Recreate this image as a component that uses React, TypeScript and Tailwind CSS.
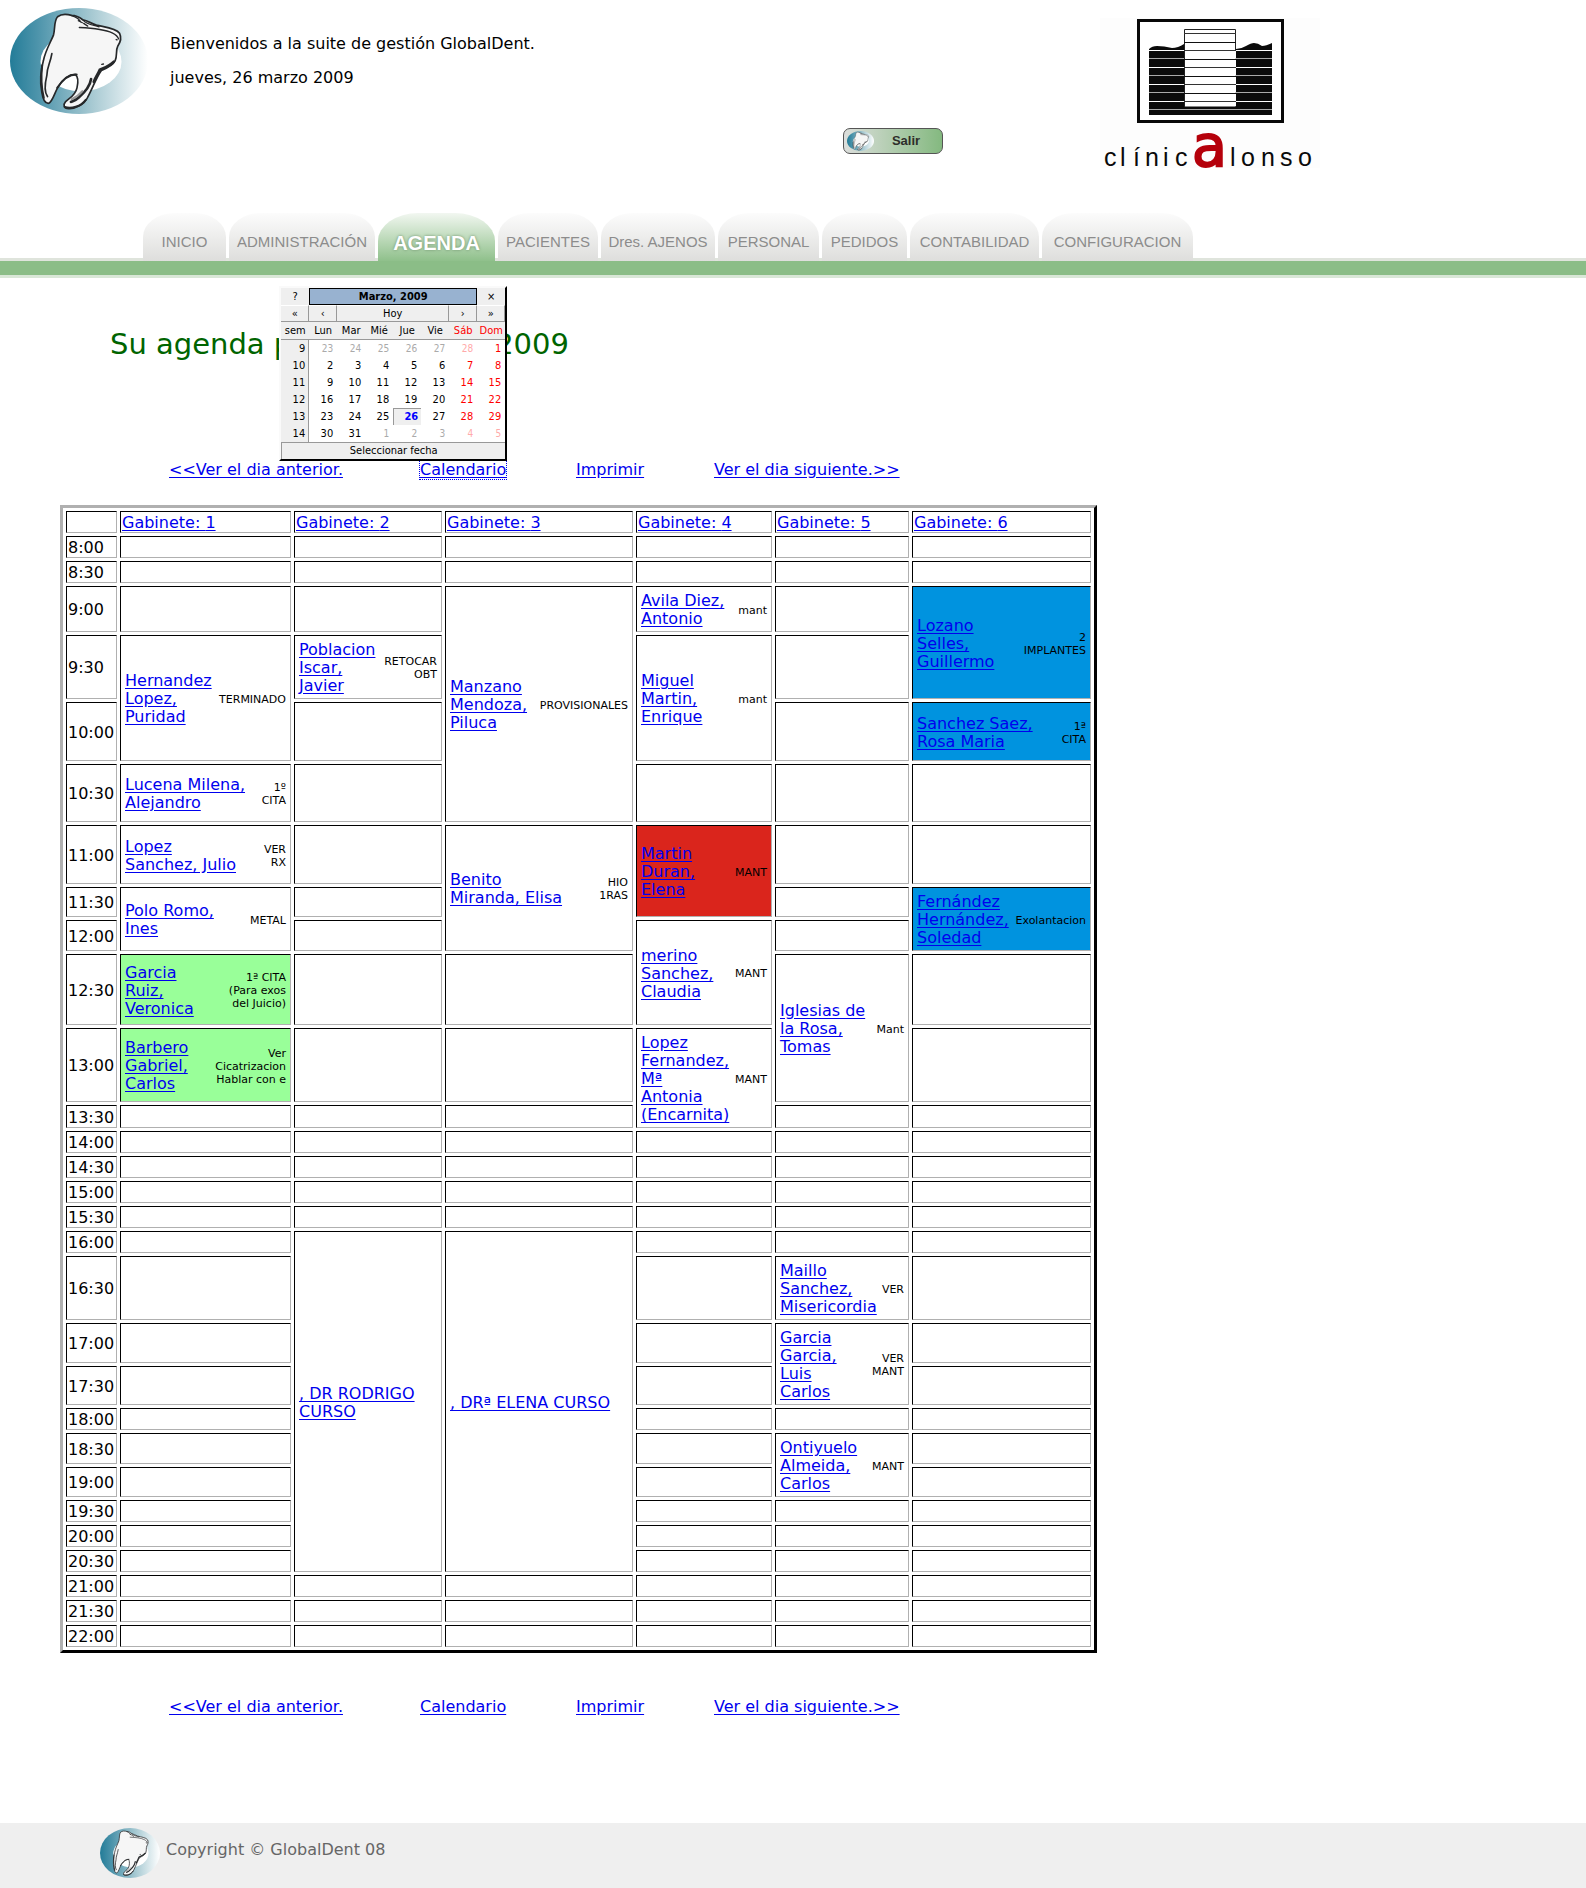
import { useId } from "react";

type Appointment = {
  col: number;
  span: number;
  name: string;
  note?: string;
  tone?: "blue" | "red" | "green";
};

type Slot = { time: string; height: string; items?: Appointment[] };

const H22 = "h-[22px]";

const slots: Slot[] = [
  { time: "8:00", height: H22 },
  { time: "8:30", height: H22 },
  {
    time: "9:00",
    height: "h-[46px]",
    items: [
      { col: 3, span: 4, name: "Manzano\nMendoza,\nPiluca", note: "PROVISIONALES" },
      { col: 4, span: 1, name: "Avila Diez,\nAntonio", note: "mant" },
      { col: 6, span: 2, name: "Lozano\nSelles,\nGuillermo", note: "2\nIMPLANTES", tone: "blue" },
    ],
  },
  {
    time: "9:30",
    height: "h-[64px]",
    items: [
      { col: 1, span: 2, name: "Hernandez\nLopez,\nPuridad", note: "TERMINADO" },
      { col: 2, span: 1, name: "Poblacion\nIscar,\nJavier", note: "RETOCAR\nOBT" },
      { col: 4, span: 2, name: "Miguel\nMartin,\nEnrique", note: "mant" },
    ],
  },
  {
    time: "10:00",
    height: "h-[59px]",
    items: [{ col: 6, span: 1, name: "Sanchez Saez,\nRosa Maria", note: "1ª\nCITA", tone: "blue" }],
  },
  {
    time: "10:30",
    height: "h-[58px]",
    items: [{ col: 1, span: 1, name: "Lucena Milena,\nAlejandro", note: "1º\nCITA" }],
  },
  {
    time: "11:00",
    height: "h-[59px]",
    items: [
      { col: 1, span: 1, name: "Lopez\nSanchez, Julio", note: "VER\nRX" },
      { col: 3, span: 3, name: "Benito\nMiranda, Elisa", note: "HIO\n1RAS" },
      { col: 4, span: 2, name: "Martin\nDuran,\nElena", note: "MANT", tone: "red" },
    ],
  },
  {
    time: "11:30",
    height: "h-[30px]",
    items: [
      { col: 1, span: 2, name: "Polo Romo,\nInes", note: "METAL" },
      { col: 6, span: 2, name: "Fernández\nHernández,\nSoledad", note: "Exolantacion", tone: "blue" },
    ],
  },
  {
    time: "12:00",
    height: "h-[31px]",
    items: [{ col: 4, span: 2, name: "merino\nSanchez,\nClaudia", note: "MANT" }],
  },
  {
    time: "12:30",
    height: "h-[71px]",
    items: [
      { col: 1, span: 1, name: "Garcia\nRuiz,\nVeronica", note: "1ª CITA\n(Para exos\ndel Juicio)", tone: "green" },
      { col: 5, span: 2, name: "Iglesias de\nla Rosa,\nTomas", note: "Mant" },
    ],
  },
  {
    time: "13:00",
    height: "h-[74px]",
    items: [
      { col: 1, span: 1, name: "Barbero\nGabriel,\nCarlos", note: "Ver\nCicatrizacion\nHablar con e", tone: "green" },
      { col: 4, span: 2, name: "Lopez\nFernandez,\nMª\nAntonia\n(Encarnita)", note: "MANT" },
    ],
  },
  { time: "13:30", height: "h-[23px]" },
  { time: "14:00", height: H22 },
  { time: "14:30", height: H22 },
  { time: "15:00", height: H22 },
  { time: "15:30", height: H22 },
  {
    time: "16:00",
    height: H22,
    items: [
      { col: 2, span: 10, name: ", DR RODRIGO\nCURSO" },
      { col: 3, span: 10, name: ", DRª ELENA CURSO" },
    ],
  },
  {
    time: "16:30",
    height: "h-[64px]",
    items: [{ col: 5, span: 1, name: "Maillo\nSanchez,\nMisericordia", note: "VER" }],
  },
  {
    time: "17:00",
    height: "h-[40px]",
    items: [{ col: 5, span: 2, name: "Garcia\nGarcia,\nLuis\nCarlos", note: "VER\nMANT" }],
  },
  { time: "17:30", height: "h-[39px]" },
  { time: "18:00", height: H22 },
  {
    time: "18:30",
    height: "h-[31px]",
    items: [{ col: 5, span: 2, name: "Ontiyuelo\nAlmeida,\nCarlos", note: "MANT" }],
  },
  { time: "19:00", height: "h-[30px]" },
  { time: "19:30", height: H22 },
  { time: "20:00", height: H22 },
  { time: "20:30", height: H22 },
  { time: "21:00", height: H22 },
  { time: "21:30", height: H22 },
  { time: "22:00", height: H22 },
];

const tones = { blue: "bg-[#0093df]", red: "bg-[#da251c]", green: "bg-[#99ff99]" };
const cellBorder = "border border-t-black border-l-black border-r-[#b0b0b0] border-b-[#b0b0b0]";
const cellPad = "px-px pt-0.5 pb-0";
const link = "text-[#0000ee] underline underline-offset-2";

function isCovered(row: number, col: number) {
  return slots.some((s, r) => r < row && s.items?.some((a) => a.col === col && r + a.span > row));
}

function ToothLogo({ className }: { className: string }) {
  const id = useId();
  return (
    <svg viewBox="30 24 412 316" preserveAspectRatio="none" className={className} role="img" aria-label="GlobalDent">
      <defs>
        <linearGradient id={id} x1="0" x2="1">
          <stop offset="0" stopColor="#237c98" />
          <stop offset="0.2" stopColor="#4d94ab" />
          <stop offset="0.6" stopColor="#a8cad3" />
          <stop offset="1" stopColor="#ffffff" />
        </linearGradient>
      </defs>
      <ellipse cx="236" cy="182" rx="206" ry="158" fill={`url(#${id})`} />
      <ellipse cx="242" cy="184" rx="121" ry="88" fill="#fff" />
      <path
        d="M172 50C182 42 200 42 214 46C227 46 238 52 247 59C264 63 272 70 288 75C312 81 346 84 357 99C363 112 360 126 352 137C345 150 351 165 344 181C337 196 318 204 303 210C290 226 278 260 262 290C252 312 225 325 205 324C190 324 188 312 196 303C210 290 225 285 230 262C234 245 232 228 225 222C205 222 185 240 172 262C162 280 158 300 146 308C134 310 128 295 125 275C120 250 120 215 130 180C136 150 152 125 160 104C165 85 161 62 172 50Z"
        fill="#f6f6f6"
        stroke="#26282a"
        strokeWidth="5"
        strokeLinejoin="round"
      />
      <g fill="none" stroke="#26282a" strokeLinecap="round">
        <path d="M237 82C275 84 310 86 335 98C345 103 352 108 354 116" strokeWidth="4" />
        <path d="M214 47C228 52 238 58 241 66M234 62L246 68M250 70L262 78M248 60C262 76 280 74 296 80" strokeWidth="4" />
        <path d="M347 118L350 119M304 192L309 191" strokeWidth="4" />
        <path d="M155 160C150 190 140 200 140 225C134 250 132 275 142 288" strokeWidth="5" />
        <path d="M126 195C122 230 124 265 131 292" strokeWidth="6" />
        <path d="M171 262C186 238 205 222 229 222" strokeWidth="6" />
        <path d="M272 236C268 262 250 278 236 290C226 300 216 302 212 304" strokeWidth="8" />
        <path d="M340 184C326 198 312 202 298 208C292 222 286 230 280 244" strokeWidth="8" />
        <path d="M193 319C212 326 242 318 256 298" strokeWidth="6" />
        <path d="M246 272C236 284 224 292 214 296" stroke="#999" strokeWidth="6" />
      </g>
    </svg>
  );
}

function ClinicLogo() {
  const gaps = [32, 40, 49, 57, 66, 74, 83, 91];
  const floors = [15, 24, 32, 41, 49, 58, 66, 75, 83];
  return (
    <svg viewBox="0 0 220 170" className="h-[170px] w-[220px]" role="img" aria-label="clínica Alonso">
      <rect width="220" height="150" fill="#fdfdfd" />
      <rect x="38.5" y="2.5" width="144" height="101" fill="#fff" stroke="#080808" strokeWidth="3" />
      <path d="M49 97V31Q52 28 57 28Q64 28 72 30Q78 30 84 26V97ZM136 97V31Q141 31 146 28Q151 25 154 25Q158 25 162 28Q166 28 172 25V97Z" fill="#0b0b0b" />
      <rect x="49" y="88" width="123" height="9" fill="#0b0b0b" />
      {gaps.map((y, i) => (
        <rect key={y} x="49" y={y} width="123" height="1" fill={i % 2 ? "#aaa" : "#fff"} />
      ))}
      <rect x="84.500" y="11.500" width="51" height="77" fill="#fff" />
      <path d="M84.500 89V11.500H135.500V32" fill="none" stroke="#222" />
      {floors.map((y, i) => (
        <rect key={y} x="84" y={y} width="52" height="1" fill={i % 2 ? "#111" : "#333"} />
      ))}
      <g fontFamily="Liberation Sans, Arial, sans-serif" fontSize="25" fill="#0a0a0a">
        <text y="148" x="4 20 33 45 63 75">clínic</text>
        <text y="148" x="130 141 161 180 198">lonso</text>
      </g>
      <text x="92" y="148" fontFamily="DejaVu Sans, Verdana, sans-serif" fontSize="57" fill="#b5000b" stroke="#b5000b" strokeWidth="2">
        a
      </text>
    </svg>
  );
}

const tabs = [
  { label: "INICIO", width: "w-[83px]" },
  { label: "ADMINISTRACIÓN", width: "w-[146px]" },
  { label: "AGENDA", width: "w-[117px]", active: true },
  { label: "PACIENTES", width: "w-[100px]" },
  { label: "Dres. AJENOS", width: "w-[114px]" },
  { label: "PERSONAL", width: "w-[101px]" },
  { label: "PEDIDOS", width: "w-[85px]" },
  { label: "CONTABILIDAD", width: "w-[129px]" },
  { label: "CONFIGURACION", width: "w-[151px]" },
];

function Tabs() {
  return (
    <nav aria-label="Principal" className="bg-[linear-gradient(#dfe4dc,#dfe4dc)] bg-[length:100%_3px] bg-bottom bg-no-repeat">
      <div className="flex gap-[3px] pl-[143px] font-['Liberation_Sans',Arial,sans-serif]">
        {tabs.map((t) =>
          t.active ? (
            <a
              key={t.label}
              href="#agenda"
              aria-current="page"
              className={`${t.width} flex h-12 items-center justify-center rounded-t-[40px_28px] bg-linear-to-b from-[#f2f7f1] to-[#8fc08b] pt-3 text-xl font-bold text-white [text-shadow:0_0_3px_#6b8f69]`}
            >
              {t.label}
            </a>
          ) : (
            <a
              key={t.label}
              href={"#" + t.label.toLowerCase()}
              className={`${t.width} flex h-12 items-center justify-center rounded-t-[32px_24px] bg-linear-to-b from-[#fcfcfc] to-[#dededc] pt-[10px] text-[15px] whitespace-nowrap text-[#8c8c8c]`}
            >
              {t.label}
            </a>
          ),
        )}
      </div>
    </nav>
  );
}

const weeks: [number, number[]][] = [
  [9, [23, 24, 25, 26, 27, 28, 1]],
  [10, [2, 3, 4, 5, 6, 7, 8]],
  [11, [9, 10, 11, 12, 13, 14, 15]],
  [12, [16, 17, 18, 19, 20, 21, 22]],
  [13, [23, 24, 25, 26, 27, 28, 29]],
  [14, [30, 31, 1, 2, 3, 4, 5]],
];

function dayColor(week: number, index: number, day: number) {
  const outside = (week === 9 && day > 7) || (week === 14 && day < 7);
  if (index > 4) return outside ? "text-[#ffaaaa] text-[10px]" : "text-[#ff0000]";
  return outside ? "text-[#aaaaaa] text-[10px]" : "text-black";
}

function CalendarPopup() {
  const key = "bg-[#efefef] p-0 text-center";
  const edge = "border-r border-b border-[#999] border-t border-t-white";
  const btn = "block h-[15px] w-full leading-[15px]";
  return (
    <div className="absolute -right-px bottom-full z-10 w-[228px] border-2 border-t-[#fafafa] border-r-black border-b-black border-l-[#fafafa] bg-white font-['DejaVu_Sans_Condensed','DejaVu_Sans',sans-serif] text-[11px] leading-[16px] text-black">
      <table className="w-full table-fixed border-separate border-spacing-0" aria-label="Marzo, 2009">
        <thead>
          <tr className="h-[17px]">
            <td className={key}><button className={btn}>?</button></td>
            <th colSpan={6} className="border border-black bg-[#98b2d0] p-0 text-center leading-[15px] font-bold">Marzo, 2009</th>
            <td className={key}><button className={btn}>×</button></td>
          </tr>
          <tr className="h-[17px]">
            <td className={`${key} ${edge}`}><button className={btn}>«</button></td>
            <td className={`${key} ${edge}`}><button className={btn}>‹</button></td>
            <td colSpan={4} className={`${key} ${edge}`}><button className={btn}>Hoy</button></td>
            <td className={`${key} ${edge}`}><button className={btn}>›</button></td>
            <td className={`${key} ${edge}`}><button className={btn}>»</button></td>
          </tr>
          <tr className="h-[18px]">
            {["sem", "Lun", "Mar", "Mié", "Jue", "Vie", "Sáb", "Dom"].map((d, i) => (
              <th key={d} className={`border-b border-[#999] bg-[#efefef] p-0 text-center font-normal ${i > 5 ? "text-[#ff0000]" : ""}`}>{d}</th>
            ))}
          </tr>
        </thead>
        <tbody>
          {weeks.map(([week, days]) => (
            <tr key={week} className="h-[17px]">
              <th className="border-r border-[#999] bg-[#efefef] p-0 pr-[3px] text-right font-normal">{week}</th>
              {days.map((d, i) =>
                week === 13 && d === 26 ? (
                  <td key={i} className="border-t border-l border-[#999] bg-[#efefef] p-0 pr-[3px] text-right font-bold text-[#0000ff]">{d}</td>
                ) : (
                  <td key={i} className={`p-0 pr-1 text-right ${dayColor(week, i, d)}`}>{d}</td>
                ),
              )}
            </tr>
          ))}
        </tbody>
        <tfoot>
          <tr className="h-[17px]">
            <td colSpan={8} className="border-t border-l border-[#999] bg-[#efefef] p-0 text-center">Seleccionar fecha</td>
          </tr>
        </tfoot>
      </table>
    </div>
  );
}

function DayLinks({ open }: { open?: boolean }) {
  return (
    <nav aria-label="Día" className="grid grid-cols-[251px_156px_138px_auto] justify-start pl-[169px] leading-[18px] whitespace-nowrap">
      <div><a href="#anterior" className={link}>&lt;&lt;Ver el dia anterior.</a></div>
      <div>
        <div className="relative inline-block">
          {open && <CalendarPopup />}
          <a href="#calendario" className={`${link} ${open ? "outline-1 outline-[#0000ee] outline-dotted" : ""}`}>Calendario</a>
        </div>
      </div>
      <div><a href="#imprimir" className={link}>Imprimir</a></div>
      <div><a href="#siguiente" className={link}>Ver el dia siguiente.&gt;&gt;</a></div>
    </nav>
  );
}

function Schedule() {
  return (
    <table className="w-[1037px] table-fixed border-separate border-spacing-[3px] border-[3px] border-t-[#b0b0b0] border-r-black border-b-black border-l-[#b0b0b0] leading-[18px]">
      <colgroup>
        <col className="w-[51px]" />
        <col className="w-[171px]" />
        <col className="w-[148px]" />
        <col className="w-[188px]" />
        <col className="w-[136px]" />
        <col className="w-[134px]" />
        <col className="w-[179px]" />
      </colgroup>
      <thead>
        <tr className="h-[22px]">
          <td className={`${cellBorder} ${cellPad}`} />
          {[1, 2, 3, 4, 5, 6].map((n) => (
            <th key={n} scope="col" className={`${cellBorder} ${cellPad} text-left font-normal`}>
              <a href={`#gabinete-${n}`} className={link}>Gabinete: {n}</a>
            </th>
          ))}
        </tr>
      </thead>
      <tbody>
        {slots.map((slot, row) => (
          <tr key={slot.time} className={slot.height}>
            <th scope="row" className={`${cellBorder} ${cellPad} text-left font-normal whitespace-nowrap`}>{slot.time}</th>
            {[1, 2, 3, 4, 5, 6].map((col) => {
              if (isCovered(row, col)) return null;
              const a = slot.items?.find((item) => item.col === col);
              if (!a) return <td key={col} className={`${cellBorder} ${cellPad}`} />;
              return (
                <td key={col} rowSpan={a.span} className={`${cellBorder} ${cellPad} ${a.tone ? tones[a.tone] : ""}`}>
                  <div className="flex items-center justify-between px-[3px] whitespace-pre">
                    <a href={`#cita-${row}-${col}`} className={link}>{a.name}</a>
                    {a.note && <span className="text-right text-[11px] leading-[13px]">{a.note}</span>}
                  </div>
                </td>
              );
            })}
          </tr>
        ))}
      </tbody>
    </table>
  );
}

export default function App() {
  return (
    <div className="bg-white font-['DejaVu_Sans',Verdana,sans-serif] text-base text-black">
      <header className="grid grid-cols-[170px_673px_257px_auto] items-start justify-start pb-[25px]">
        <div className="pt-2 pl-[10px]">
          <ToothLogo className="h-[106px] w-[138px]" />
        </div>
        <div className="flex flex-col gap-4 pt-[35px] leading-[18px]">
          <p>Bienvenidos a la suite de gestión GlobalDent.</p>
          <p>jueves, 26 marzo 2009</p>
        </div>
        <div className="pt-32">
          <button className="flex h-[26px] w-[100px] items-center rounded-[7px] border border-[#555] bg-linear-to-r from-[#dcdedc] to-[#84b980] pl-[3px] font-['Liberation_Sans',Arial,sans-serif] text-[13px] font-bold text-[#2e2e2a]">
            <ToothLogo className="h-5 w-[27px]" />
            <span className="flex-1 pr-1 text-center">Salir</span>
          </button>
        </div>
        <div className="pt-[18px]">
          <ClinicLogo />
        </div>
      </header>

      <Tabs />
      <div className="h-[17px] border-b-[3px] border-[#d9e7d7] bg-[#8bbd87]" />

      <main className="pt-12">
        <h1 className="pl-[110px] text-[29px] leading-9 text-[#006400]">Su agenda para 26 marzo 2009</h1>
        <div className="pt-[99px]">
          <DayLinks open />
        </div>
        <div className="pt-[26px] pb-[45px] pl-[60px]">
          <Schedule />
        </div>
        <DayLinks />
      </main>

      <footer className="mt-[107px] flex h-[65px] items-start gap-[6px] bg-[#efefef] pt-[5px] pl-[100px] text-[#666]">
        <ToothLogo className="h-[50px] w-[60px]" />
        <p className="pt-[13px] leading-[18px]">Copyright © GlobalDent 08</p>
      </footer>
    </div>
  );
}
